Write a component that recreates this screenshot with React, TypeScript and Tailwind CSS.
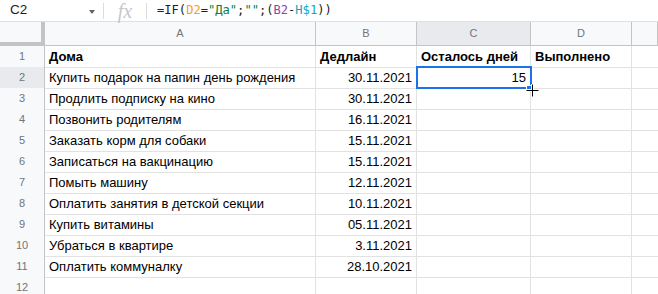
const rows: [string, string][] = [
  ['Купить подарок на папин день рождения', '30.11.2021'],
  ['Продлить подписку на кино', '30.11.2021'],
  ['Позвонить родителям', '16.11.2021'],
  ['Заказать корм для собаки', '15.11.2021'],
  ['Записаться на вакцинацию', '15.11.2021'],
  ['Помыть машину', '12.11.2021'],
  ['Оплатить занятия в детской секции', '10.11.2021'],
  ['Купить витамины', '05.11.2021'],
  ['Убраться в квартире', '3.11.2021'],
  ['Оплатить коммуналку', '28.10.2021'],
  ['', ''],
];

const cols = 'grid grid-cols-[45px_271px_101px_114px_101px_1fr]';

function FormulaBar() {
  return (
    <div className="flex h-[22px] items-center border-b border-[#e0e0e0] bg-white">
      <div className="flex w-[103px] items-center pl-[10px] pr-[8px]">
        <span className="text-[13.5px] text-[#202124]">C2</span>
        <span className="ml-auto mt-[2px] h-0 w-0 border-x-[3.5px] border-t-[4px] border-x-transparent border-t-[#5f6368]" />
      </div>
      <div className="h-[16px] w-px bg-[#dadce0]" />
      <div className="flex w-[42px] items-center justify-center font-['Liberation_Serif',serif] text-[20px] italic text-[#c4c7cc]">
        fx
      </div>
      <div className="h-[16px] w-px bg-[#dadce0]" />
      <div className="pl-[10px] font-['DejaVu_Sans_Mono',monospace] text-[12.1px] text-[#202124]">
        =IF(<span className="text-[#f4a02b]">D2</span>=<span className="text-[#0b8043]">"Да"</span>;
        <span className="text-[#0b8043]">""</span>;(<span className="text-[#8e44ad]">B2</span>-
        <span className="text-[#12a5c4]">H$1</span>))
      </div>
    </div>
  );
}

export default function App() {
  return (
    <div className="relative h-[294px] w-[658px] overflow-hidden bg-white font-['Liberation_Sans',Arial,sans-serif] text-[13px] text-black">
      <FormulaBar />

      {/* column letters */}
      <div className={`${cols} h-[24px] bg-[#f8f9fa] text-[11px] text-[#70757a]`}>
        <div className="border-b-4 border-r-4 border-[#c4c4c4]" />
        {['A', 'B', 'C', 'D', ''].map((c) => (
          <div
            key={c}
            className={`flex items-center justify-center border-b border-r border-[#c4c4c4] ${c === 'C' ? 'bg-[#e8eaed]' : ''}`}
          >
            {c}
          </div>
        ))}
      </div>

      {/* header row */}
      <div className={`${cols} h-[21px] font-bold`}>
        <div className="flex items-center justify-center border-b border-r border-[#c4c4c4] bg-[#f8f9fa] text-[11px] font-normal text-[#70757a]">
          1
        </div>
        <div className="flex items-center border-b border-r border-[#e2e2e2] pl-[4px] pt-px">Дома</div>
        <div className="flex items-center border-b border-r border-[#e2e2e2] pl-[4px] pt-px">Дедлайн</div>
        <div className="flex items-center border-b border-r border-[#e2e2e2] pl-[4px] pt-px">Осталось дней</div>
        <div className="flex items-center border-b border-r border-[#e2e2e2] pl-[4px] pt-px">Выполнено</div>
        <div className="border-b border-[#e2e2e2]" />
      </div>

      {rows.map(([task, date], i) => (
        <div key={i} className={`${cols} h-[21px]`}>
          <div
            className={`flex items-center justify-center border-b border-r border-[#c4c4c4] text-[11px] text-[#70757a] ${i === 0 ? 'bg-[#e8eaed]' : 'bg-[#f8f9fa]'}`}
          >
            {i + 2}
          </div>
          <div className="flex items-center overflow-hidden whitespace-nowrap border-b border-r border-[#e2e2e2] pl-[4px] pt-px">
            {task}
          </div>
          <div className="flex items-center justify-end border-b border-r border-[#e2e2e2] pr-[4px] pt-px">{date}</div>
          <div className="flex items-center justify-end border-b border-r border-[#e2e2e2] pr-[4px] pt-px">
            {i === 0 ? '15' : ''}
          </div>
          <div className="border-b border-r border-[#e2e2e2]" />
          <div className="border-b border-[#e2e2e2]" />
        </div>
      ))}

      {/* selection on C2 */}
      <div className="pointer-events-none absolute left-[416px] top-[66px] h-[23px] w-[116px] border-2 border-[#1a73e8]" />
      <div className="absolute left-[526px] top-[85px] h-[6px] w-[6px] border border-white bg-[#1a73e8]" />
      <svg className="absolute left-[526px] top-[84px]" width="13" height="13" viewBox="0 0 13 13">
        <path d="M6.5 0v13M0 6.5h13" stroke="white" strokeWidth="3" />
        <path d="M6.5 0.5v12M0.5 6.5h12" stroke="black" strokeWidth="1" />
      </svg>
    </div>
  );
}
